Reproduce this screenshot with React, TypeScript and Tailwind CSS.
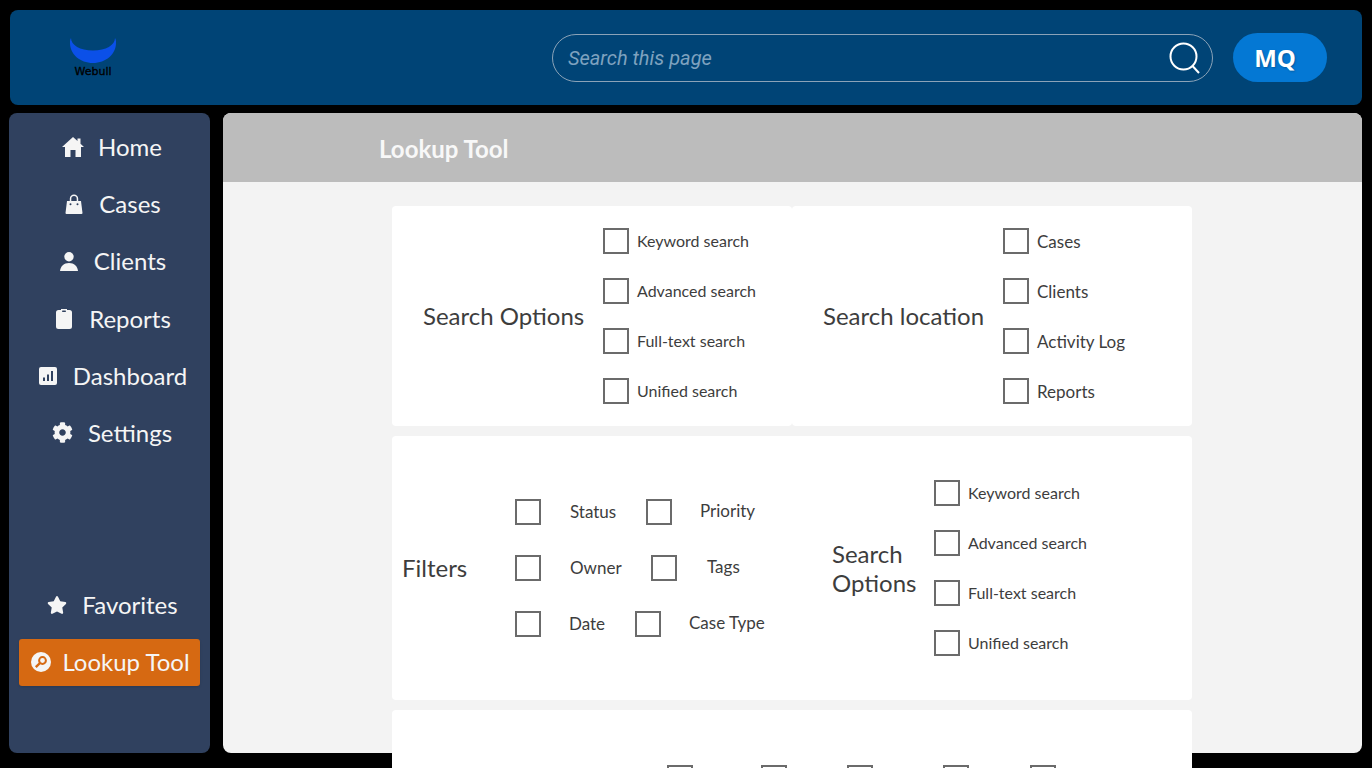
import { FaCog, FaStar } from "react-icons/fa";

const navTop = ["Home", "Cases", "Clients", "Reports", "Dashboard", "Settings"];

const searchOptions = ["Keyword search", "Advanced search", "Full-text search", "Unified search"];
const locations = ["Cases", "Clients", "Activity Log", "Reports"];

const filterRows = [
  { first: "Status", second: "Priority", firstGap: "ml-[29px]", boxGap: "ml-[26px]", labelGap: "ml-[28px]" },
  { first: "Owner", second: "Tags", firstGap: "ml-[29px]", boxGap: "ml-[31px]", labelGap: "ml-[30px]" },
  { first: "Date", second: "Case Type", firstGap: "ml-[28px]", boxGap: "ml-[16px]", labelGap: "ml-[28px]" },
];

function NavIcon({ name }: { name: string }) {
  if (name === "Home")
    return (
      <svg viewBox="0 0 22 20" className="h-[20px] w-[22px]">
        <path fill="#f5f5f5" d="M11 0 0 10h3v10h5.500v-7h5v7H19V10h3l-3.500-3.200V1.500h-3v2.600z" />
      </svg>
    );
  if (name === "Cases")
    return (
      <svg viewBox="0 0 18 20" className="h-[20px] w-[18px]">
        <path
          fill="#f5f5f5"
          fillRule="evenodd"
          d="M2 7h2.800V4.800a4.200 4.200 0 0 1 8.400 0V7H16l1.500 12a1 1 0 0 1-1 1H1.500a1 1 0 0 1-1-1zM6.300 7h5.400V4.800a2.700 2.700 0 0 0-5.400 0zM5.500 9.200a1 1 0 1 0 0 2 1 1 0 0 0 0-2zM12.500 9.200a1 1 0 1 0 0 2 1 1 0 0 0 0-2z"
        />
      </svg>
    );
  if (name === "Clients")
    return (
      <svg viewBox="0 0 18 19" className="h-[19px] w-[18px]">
        <circle cx="9" cy="4.700" r="4.700" fill="#f5f5f5" />
        <path fill="#f5f5f5" d="M0 19c.6-5 3.800-8 9-8s8.400 3 9 8z" />
      </svg>
    );
  if (name === "Reports")
    return (
      <svg viewBox="0 0 16 21" className="h-[21px] w-[16px]">
        <path fill="#f5f5f5" d="M2.500 2H5V1h6v1h2.500A2.500 2.500 0 0 1 16 4.500v14a2.500 2.500 0 0 1-2.500 2.500h-11A2.500 2.500 0 0 1 0 18.500v-14A2.500 2.500 0 0 1 2.500 2z" />
        <rect x="6" y="2.500" width="4" height="1.500" rx="0.700" fill="#30415f" />
      </svg>
    );
  if (name === "Dashboard")
    return (
      <svg viewBox="0 0 18 18" className="h-[18px] w-[18px]">
        <rect width="18" height="18" rx="2" fill="#f5f5f5" />
        <rect x="4" y="10.500" width="2" height="3.500" fill="#30415f" />
        <rect x="8" y="7.500" width="2" height="6.500" fill="#30415f" />
        <rect x="12" y="4" width="2" height="10" fill="#30415f" />
      </svg>
    );
  if (name === "Favorites") return <FaStar className="h-[20px] w-[20px] text-[#f5f5f5]" />;
  return <FaCog className="h-[21px] w-[21px] text-[#f5f5f5]" />;
}

function Box() {
  return <span className="block h-[26px] w-[26px] shrink-0 border-2 border-[#6b6b6b] bg-white" />;
}

function CheckList({ items, large }: { items: string[]; large?: boolean }) {
  return (
    <div className="flex flex-col gap-6">
      {items.map((item) => (
        <div key={item} className="flex h-[26px] items-center gap-[8px]">
          <Box />
          <span className={large ? "translate-y-px text-[17px] leading-[26px] text-[#3d3d3d]" : "text-base leading-[26px] text-[#3d3d3d]"}>
            {item}
          </span>
        </div>
      ))}
    </div>
  );
}

function NavRow({ name }: { name: string }) {
  return (
    <a className="flex h-[42px] items-center justify-center gap-[14px] pl-[5px] text-2xl text-[#f5f5f5]">
      <span className="flex w-[22px] justify-center">
        <NavIcon name={name} />
      </span>
      {name}
    </a>
  );
}

export default function App() {
  return (
    <div className="flex h-[768px] w-[1372px] flex-col gap-2 overflow-hidden bg-black p-[10px] pb-[15px] font-['Lato',sans-serif]">
      {/* top bar */}
      <header className="flex h-[95px] shrink-0 items-center rounded-lg bg-[#004476]">
        <div className="ml-[60px] flex w-[46px] flex-col items-center">
          <svg viewBox="0 0 46 25" className="h-[25px] w-[46px]">
            <path fill="#0b50e8" d="M1 0c0 7 9 12.500 22 12.500S45 7 45 0c1 1.500 1 3 1 5 0 11-10 20-23 20S0 16 0 5c0-2 0-3.500 1-5z" />
          </svg>
          <span className="mt-[3px] font-['DejaVu_Sans',sans-serif] text-[11px] leading-[11px] text-black [-webkit-text-stroke:0.3px_black]">Webull</span>
        </div>
        <div className="ml-[436px] flex h-[48px] w-[661px] items-center justify-between rounded-full border border-[#8ba3b8] pr-[10px] pl-[15px]">
          <span className="font-['Roboto',sans-serif] text-xl text-[#7ea2bf] italic">Search this page</span>
          <svg viewBox="0 0 34 34" className="h-[34px] w-[34px]" fill="none" stroke="#fff" strokeWidth="2">
            <circle cx="15.500" cy="15.500" r="13" />
            <path d="M24.500 25 31 32" />
          </svg>
        </div>
        <div className="ml-[20px] flex h-[49px] w-[94px] items-center justify-center rounded-full bg-[#0478d4] pr-[10px] font-['Open_Sans',sans-serif] text-2xl font-bold text-white [text-shadow:1px_1px_2px_rgba(0,0,0,0.25)]">
          MQ
        </div>
      </header>

      <div className="flex min-h-0 flex-1 gap-[13px]">
        {/* sidebar */}
        <aside className="-ml-px flex w-[201px] shrink-0 flex-col rounded-lg bg-[#30415f] pt-[13px]">
          <nav className="flex flex-col gap-[15.2px]">
            {navTop.map((name) => (
              <NavRow key={name} name={name} />
            ))}
          </nav>
          <div className="mt-[130px]">
            <NavRow name="Favorites" />
          </div>
          <a className="mx-[10px] mt-[13px] flex h-[47px] items-center justify-center gap-[11px] rounded-[3px] bg-[#d66912] pl-[2px] text-2xl text-[#f5f5f5] shadow">
            <svg viewBox="0 0 20 20" className="h-[20px] w-[20px]">
              <circle cx="10" cy="10" r="10" fill="#f5f5f5" />
              <circle cx="11.500" cy="8.500" r="3.400" fill="none" stroke="#d66912" strokeWidth="2" />
              <path d="M9 11 4.800 15.200" stroke="#d66912" strokeWidth="2.400" />
            </svg>
            Lookup Tool
          </a>
        </aside>

        {/* main */}
        <main className="flex min-w-0 flex-1 flex-col rounded-lg bg-[#f3f3f3]">
          <div className="flex h-[69px] shrink-0 items-center rounded-t-lg bg-[#bcbcbc] pt-[2px] pl-[156px] text-2xl font-bold text-[#f8f8f8]">
            Lookup Tool
          </div>
          <div className="ml-[169px] flex w-[800px] flex-col gap-[10px] pt-[24px]">
            <div className="flex h-[220px] shrink-0">
              <div className="flex w-[400px] items-center rounded bg-white pl-[31px]">
                <h3 className="w-[180px] text-2xl text-[#3d3d3d]">Search Options</h3>
                <CheckList items={searchOptions} />
              </div>
              <div className="flex w-[400px] items-center rounded bg-white pl-[31px]">
                <h3 className="w-[180px] text-2xl text-[#3d3d3d]">Search location</h3>
                <CheckList items={locations} large />
              </div>
            </div>

            <div className="flex h-[264px] shrink-0 rounded bg-white">
              <div className="flex w-[439px] items-start pl-[10px]">
                <h3 className="mt-[116px] w-[113px] text-2xl text-[#3d3d3d]">Filters</h3>
                <div className="mt-[63px] flex flex-col gap-[30px]">
                  {filterRows.map((row) => (
                    <div key={row.first} className="flex h-[26px] items-center text-[17px] text-[#3d3d3d]">
                      <Box />
                      <span className={`${row.firstGap} w-[50px]`}>{row.first}</span>
                      <span className={row.boxGap}>
                        <Box />
                      </span>
                      <span className={`${row.labelGap} -mt-[2px]`}>{row.second}</span>
                    </div>
                  ))}
                </div>
              </div>
              <div className="flex items-center">
                <h3 className="ml-px w-[102px] text-2xl leading-[29px] text-[#3d3d3d]">
                  Search
                  <br />
                  Options
                </h3>
                <div className="-mt-[1px]">
                  <CheckList items={searchOptions} />
                </div>
              </div>
            </div>

            <div className="flex h-[200px] shrink-0 items-start rounded bg-white pt-[55px] pl-[275px]">
              <Box />
              <span className="ml-[68px]">
                <Box />
              </span>
              <span className="ml-[60px]">
                <Box />
              </span>
              <span className="ml-[70px]">
                <Box />
              </span>
              <span className="ml-[61px]">
                <Box />
              </span>
            </div>
          </div>
        </main>
      </div>
    </div>
  );
}
